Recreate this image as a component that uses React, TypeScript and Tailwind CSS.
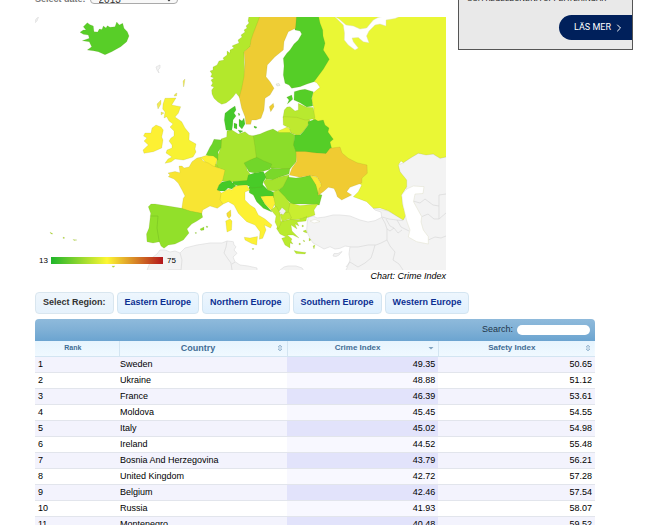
import React, { useState } from 'react';
import { ChevronRight } from 'lucide-react';

interface CountryRow {
  rank: number;
  country: string;
  crime: string;
  safety: string;
}

interface Shape {
  name: string;
  fill: string;
  d: string;
}

const rows: CountryRow[] = [
  { rank: 1, country: 'Sweden', crime: '49.35', safety: '50.65' },
  { rank: 2, country: 'Ukraine', crime: '48.88', safety: '51.12' },
  { rank: 3, country: 'France', crime: '46.39', safety: '53.61' },
  { rank: 4, country: 'Moldova', crime: '45.45', safety: '54.55' },
  { rank: 5, country: 'Italy', crime: '45.02', safety: '54.98' },
  { rank: 6, country: 'Ireland', crime: '44.52', safety: '55.48' },
  { rank: 7, country: 'Bosnia And Herzegovina', crime: '43.79', safety: '56.21' },
  { rank: 8, country: 'United Kingdom', crime: '42.72', safety: '57.28' },
  { rank: 9, country: 'Belgium', crime: '42.46', safety: '57.54' },
  { rank: 10, country: 'Russia', crime: '41.93', safety: '58.07' },
  { rank: 11, country: 'Montenegro', crime: '40.48', safety: '59.52' },
];

const regions = ['Eastern Europe', 'Northern Europe', 'Southern Europe', 'Western Europe'];

// Countries without data
const neutral: string[] = [
  'M406.7 190L400 172L398 165L403 163L410 158L418 153.300L433 154L440 158L447 156.700V271H345.500L347 268L350 260L349 254L350 246.700L345 246L340 248.300L335 249L330 246.700L324 249L317 245L313 243L310 238.300L308 234L306.700 230L307.300 222L308.300 217.300L313 216L317 218L325 217L333 215L340 215L350 216L360 220L368 222L375 220.700L381.700 217.300L381 212L375 210L373 208L388 211L397 216L403 220L406 215Z',
  'M146.700 271L151.700 258L157 254L160 250L165 250L170 252L175 251L180 253L185 248L197 245L210 243L222 243L227 241L233.300 241.700L234 245L236 246.700L234 250L237 253.300L233 257L235 261.700L240 265L248 266L257 268V271Z',
  'M279 271L284 267L288 266L296 266L302 268L304 271Z',
  'M333 256L334 253.500L338 253.500L342 251.500L339 255L336 256.500Z',
  'M156 67L160 65L160 68L158 70L159 73L157 70Z',
  'M34.500 23L36 19L38.500 17L37 21Z',
];

const neutralBorders: string[] = [
  'M381.700 217.300L385 223L387 229L387 240L381 243L376 245L368 245L358 247L350 247',
  'M375 245L373 252L371 258L365 263L358 267L350 262M350 262L346 267',
  'M387 240L390 246L395 252L393 260L399 264L403 270',
  'M382 217L389 219L397 220L403 220.700M386 219L390 226L394 228L390 231L387 229M397 220L401 227L409 231M394 228L398 233L402 230',
  'M421.700 216.700L428 214L434 219L439 219L439 195L446 194M413 201L420 203L425 199L433 205L439 206M439 219L446 213',
  'M428.300 240L435 237L441 238L446 236',
  'M180 253L182 260L181 270L168 270M227 241L226 247L224 253L228 259L231 263L232 270M235 262L232 264',
];

const shapes: Shape[] = [
  { name: 'Iceland', fill: '#58ce28', d: 'M80 32.300L83.300 30L86 30L83.300 26.700L87.300 22.700L90 24.700L93.300 26L94 31.700L97.700 32L99.300 29L102 29.500L103.300 26L106 28L107.300 25.700L110 27.300L115 26.700L116.700 22L119.300 25L122.700 23.300L124 28.300L127.300 31.700L129 36L126.700 41.700L120.700 46.700L111.700 51.700L105 54.700L98.300 51.700L93.300 50.700L87.300 50L91.700 46.700L89.300 41.700L82.300 40.700L89.300 38.300L88.300 35L83.300 34.300Z' },
  { name: 'Russia', fill: '#eaf735', d: 'M317 16H447V156.700L440 158.300L433.300 154L426 155L418.300 153.300L410 158.300L403.300 162.700L401 161L398.300 165L400 171.700L406.700 180L406.700 186.700L401.700 195L402.700 205L406 215L403.300 220L396.700 216L388.300 210.700L380 208L373.300 208.300L366.700 201.700L353.300 196.700L358.300 191.700L361.700 185L357 182L360 177L340 158L328 152L320 130L312 118L314 108.300L311.700 101.700L312.700 93.300L320 87.300L316.700 82.700L314 81.700L323 65L320 40Z' },
  { name: 'Kaliningrad', fill: '#eaf735', d: 'M278 131L283 129L287 127L291 130L290 134H279Z' },
  { name: 'Finland', fill: '#55ce27', d: 'M294 16H318.500L320 23L322.700 30L323 36L325 43.300L323.300 50L329.300 59.300L323.300 69.300L314 81.700L307 84L300 86.700L291.700 88.300L289 85L285 83.300L283.300 75L284 66L283.300 58.300L287 53L290 50L294 44L298.300 40L301.700 34L300 31L295 30Z' },
  { name: 'Aland', fill: '#f0f0f0', d: 'M276 84L279 83.500L280 85.500L277 86Z' },
  { name: 'Norway', fill: '#b3e82c', d: 'M249 16L248 21L249 23L246 26L247 28L244 30L245 32L241 35L242 37L238 40L239 43L234 45L232 46L234 48L230 50L230 53L227 51L227 55L223 58L224 60L219 61L217 65L213 67L213 70L210 71L212 74L210.700 76.700L214 78L211 80L212.700 83L211 86L214 87L211.700 90L212 94L214 98.300L218 102L221.700 104.300L226 103L230 100L233 97L236 93L240 98L245 80L244 52L250 47L255 33L262 16Z' },
  { name: 'Sweden', fill: '#eecc33', d: 'M260 16H296.500L295.500 28.300L288.300 31.700L284 41.700L283.300 50L275 56.700L267.300 65L266 76.700L270 81.700L274 88.300L270 95L265 98.300L264 110L261 118.300L256 120L251.700 120L250.700 124.300L246 124.300L245 116.700L241.700 108.300L239.300 97.300L241.700 88.300L244 76.700L245 63L244 51.700L250 46.700L251 40L253.300 33.300Z' },
  { name: 'Gotland', fill: '#eecc33', d: 'M269.300 106.700L273.300 103.300L274 106.700L270.700 111.700Z' },
  { name: 'Estonia', fill: '#55ce27', d: 'M294.300 91.700L300 90L305 89.300L313.300 91.700L311.700 98.300L312.700 106L306.700 107L300 102.700L294 100Z' },
  { name: 'Saaremaa', fill: '#55ce27', d: 'M286.700 97.300L291.700 95L292.700 99.300L287.300 104L289 100Z' },
  { name: 'Latvia', fill: '#b8e92f', d: 'M283 118L284.300 110L287 107L290 106.700L295 111L298.300 110L298.300 103.300L306.700 107.300L313.300 107.500L315 118.300L305 121L296.700 118Z' },
  { name: 'Lithuania', fill: '#bfe92f', d: 'M283 116.700L296.700 117.300L305 120L310 120L308.300 125L303.300 131.700L298.300 136L291 133L289.300 128L283.300 125Z' },
  { name: 'Denmark', fill: '#45c92a', d: 'M225 113.300L230 109.300L235 106L236 110L234 113L236 116L233 120L232.700 125L231.700 131L226 130L224.300 120Z' },
  { name: 'Danish islands', fill: '#45c92a', d: 'M239 119L242 121L244 118L245 124L242 129L239 126ZM234 123L237 124L237 129L234 128ZM254 126L257 127L256 128.500L254 127.500ZM238 130L243 131L240 133ZM238 113L240 114L239 116Z' },
  { name: 'Poland', fill: '#8bdd2a', d: 'M252 136L260 134L267 131L273 129L279 132.500L290 132.500L295 135L294 145L297 153L296 162L290 169L282 169L271 168L260 161L253 159Z' },
  { name: 'Belarus', fill: '#55ce27', d: 'M295 135L300 135L303.300 131.700L308.300 125L308 121.700L315 119.300L318 121L323.300 120L325 125L329 128L328 132L333.300 139.300L330 142L332 150L326 154L305 153L296 152L293.500 145Z' },
  { name: 'Germany', fill: '#a9e52e', d: 'M221 139L226.700 137L227 131L232 130L238.300 134L245 131.700L249 135L253.300 136L255 146.700L256.500 159L246 163L247 170L251 175L247 181L230 182L222 181L223 170L216 167L217 157L220.700 148Z' },
  { name: 'Netherlands', fill: '#6cd42a', d: 'M221.500 140L214 139.300L212 144L210 147L206 155L213 158L218 160L218 152L221 148Z' },
  { name: 'Belgium', fill: '#fdf133', d: 'M200.700 157.300L206 155.500L213.300 156L217.300 159L216 163L217 168L208 165Z' },
  { name: 'Luxembourg', fill: '#a9e52e', d: 'M215.500 164L218 166L217 168.500L215 167.500Z' },
  { name: 'France', fill: '#f8e533', d: 'M200.700 157.300L203 161L208.300 163L213 166L216.700 167.300L225 170L222.700 180L217.300 189L221.700 193.300L220.700 200L223.300 204L217.300 208.300L210 206L202.700 210L201.700 214L190 211.500L181.700 209L183.300 198.300L185 196L182 190L178.300 183.300L174 179L168.300 176.700L170 175L168 173L175 171.500L180 172.700L179 166L182 166L184 168L189 167L192 161.700L197 158Z' },
  { name: 'Switzerland', fill: '#45ca28', d: 'M217 190L219 185L222 182L230 180.500L234 184L236 186L231.700 189L228 188L225 191L220 191Z' },
  { name: 'Spain', fill: '#92e02a', d: 'M148.300 206.700L151 204L155 204L168 206L181.700 208.300L190 211L201.700 213.300L202.700 217.300L197 221L191.700 224L187 229L189 233L183.300 240L175 244L168.300 245L164 248.300L161 246L159.300 241.700L153 243L147 241.700L146.500 234L149 228L150.700 213.300Z' },
  { name: 'Balearic Islands', fill: '#92e02a', d: 'M200 229L204 227L204 230L201 230.500ZM206 226L208 226.500L207 228ZM195 232.500L196.500 232.500L196 234Z' },
  { name: 'Croatia', fill: '#4acb28', d: 'M249 187L262 184L267 189L275 193L274 198L261 197L265 204L272 212L263.300 208.300L256.700 201.700L253.300 195L249.300 192.700Z' },
  { name: 'Austria', fill: '#48cb28', d: 'M233 184L233 181.500L247 180.500L248.300 175L255 172.700L263.300 171.500L266.500 177L263.300 181.700L262 187L251.700 188L246.700 185L238.300 186Z' },
  { name: 'Czechia', fill: '#72d62a', d: 'M244 163L250 160L256.700 157.300L264 161L271.700 164L270 169.300L261.700 171.700L255 173L249 172Z' },
  { name: 'Slovakia', fill: '#7ad82a', d: 'M265 173.300L271.700 168L280 169L290 168.500L289 174L280 177L273.300 180L266 179Z' },
  { name: 'Hungary', fill: '#a4e32c', d: 'M263.300 181.700L266 179L272 180L280 176.700L289 175L289 180L284 187L277 191L268 190.500Z' },
  { name: 'Romania', fill: '#72d729', d: 'M288 177L296 178L303 177L310 175L315 182L318 189L318.300 194L322 195L319.300 205L305 204L291.700 204L285 198L278 190.500L283 187Z' },
  { name: 'Serbia', fill: '#b8e92f', d: 'M273.300 191.700L278.300 190L285 196.700L290 203.300L291 212L284 214L276 210L274 203Z' },
  { name: 'Bosnia', fill: '#fbf035', d: 'M260.500 196.500L266 196L273.300 196L275 203.300L271.700 210.500L265 204Z' },
  { name: 'Bulgaria', fill: '#c9ee30', d: 'M290 203L300 205.500L318 204L314 210L315 215L306 218L298 219.500L290 220L288.300 211.700Z' },
  { name: 'Greece', fill: '#b9ea2e', d: 'M276.500 228.500L280 221.700L290 219.300L298 220L307 216.500L306 221L297 222L299 226L295 224L297 229L291 225L292 231L299 238L293 235L287.300 235L292 239L291 241L293 244L290 243L290 248L285 245L281.700 238.300L286 237L280 234Z' },
  { name: 'Greek islands', fill: '#b9ea2e', d: 'M294 250.500L298 251.500L306 252.500L305 254L296 253.500ZM303 231L306 230L307 233L304 232ZM309 238L311 240L309 241ZM299 243L301 244L299 245ZM303 240L305 241L304 242ZM313 246L315 245L314 249ZM302 225L304 226L302 227Z' },
  { name: 'Albania', fill: '#c4ec30', d: 'M271 210L276 206L280 213L281 223L278.300 229L275 222L276 216Z' },
  { name: 'Macedonia', fill: '#c4ec30', d: 'M280 214.500L289 212L291.500 218L282 221.500Z' },
  { name: 'Kosovo', fill: '#f0f0f0', d: 'M282 207.500L286 211L283 215L279 211.500Z' },
  { name: 'Ukraine', fill: '#f0cb32', d: 'M296 151.500L305 151.500L317 153L326 153.500L330 148.300L340 147L342 153L348.300 158.300L357 162.700L367 165L367.300 173.300L362 178L361.700 183L350 187.300L346.700 191.700L351.700 195L341.700 200L337.300 196.700L336 192.700L334 188.500L328.300 187.300L323.300 191.700L318 195.500L319 186L321 184L317 176.700L310 175.500L300 177.300L289.300 175L292 168L296.500 161.700Z' },
  { name: 'Moldova', fill: '#fbe833', d: 'M310 175.500L317 177L320 182L321.700 186L319 188.500L318.300 194L316 185Z' },
  { name: 'Italy', fill: '#fdf133', d: 'M221 193.300L226.700 190L229 189L232 190L234 187L238.300 185.500L246.700 185L250 190L245 192L245 200L250 205L255 208.300L258.300 215L265 219L272 225L270.500 228L264.300 225L266 230L262.700 238.300L259.300 239.300L260 231.700L255 225L246.700 221.700L238.300 213.300L234 205L228.300 201.700L223.300 204L220 200Z' },
  { name: 'Sicily', fill: '#fdf133', d: 'M244.300 237.300L250 238L257.500 236.500L256.700 245L251.700 243.500L245 240Z' },
  { name: 'Sardinia', fill: '#fdf133', d: 'M225.700 221L230 219L232 221L231.500 230L227 232Z' },
  { name: 'Corsica', fill: '#f5df33', d: 'M226.700 213.300L230.700 210L231 216L229 218.500L227 216Z' },
  { name: 'Great Britain', fill: '#f8f233', d: 'M165 98.300L176 98L171.700 105L180.700 106.700L178.300 113.300L175 117L181.700 121.700L185 128L189.300 133.300L189 140L196 144L195 149L196 152L193 157L183.300 160L175 159L171 162L165 163.300L168 159L172 157L166 153L167 150L172 148L172 145L169 141L171 138L174 136L174 131L170 127L173 124L169 121L166.700 116.700L164 118L165 112L162.700 109L163 104Z' },
  { name: 'Scottish islands', fill: '#f2ea55', d: 'M157 104L161 100L161 104L158 109ZM161 112L164 113L161 115ZM183 81L185 79L184 86L183.500 87ZM175 94L177 93L176.500 96L174 96Z' },
  { name: 'Ireland', fill: '#fdf033', d: 'M145 133L151 133L152 128L156 125L161 127L163.300 130L161.700 137L163 140L161.700 148L153.300 151.700L144 153.300L143 150L148.300 145L144 141L147 138L143.500 136Z' },
  { name: 'Azores and Madeira', fill: '#b9ea2e', d: 'M50 232L53 234L51 234ZM63 237L65 238L63 238.500ZM73 239.500L77 240L74 240.500ZM112 266L115 266L113 267.500ZM252 248.500L254 248.500L253 250Z' },
];

const seas: string[] = [
  // White Sea
  'M334 16L343.300 25L344.500 33L344.300 40L348.300 45L355 50L358.300 48L353.300 41.700L352 38L358.300 37.500L363.300 41.700L369 42.700L366.500 36L369 31L375 25L380 24L386 26L386 20L395 18.500L401 16H384L378 17.500L373.300 20L366.700 28L360 29L353.300 26L346 25L339 19Z',
  // Caspian Sea
  'M413.300 186L424 186.700L423 193.500L415 194L413.500 201.700L421.700 216.700L421 222L423.300 230L428.300 236.700L428.300 244L416.700 241.700L408.300 237L410 230L406.700 221L403 205L401.700 195L406.700 189Z',
  // Marmara
  'M310 221L315 219.500L320 221.500L314 223Z',
];

const CrimeMap: React.FC = () => (
  <svg viewBox="35 17 411 253" className="block w-full" role="img" aria-label="Crime Index map of Europe">
    <defs>
      <linearGradient id="legend" x1="0" x2="1">
        <stop offset="0" stopColor="#1fb52b" />
        <stop offset="0.500" stopColor="#fdf733" />
        <stop offset="1" stopColor="#b3161b" />
      </linearGradient>
    </defs>
    {neutral.map(d => <path key={d} d={d} fill="#f3f3f3" stroke="#dedede" strokeWidth="0.700" />)}
    <g fill="none" stroke="#d9d9d9" strokeWidth="0.700">
      {neutralBorders.map(d => <path key={d} d={d} />)}
    </g>
    {shapes.map(shape => (
      <path key={shape.name} d={shape.d} fill={shape.fill} stroke="#6f7a20" strokeOpacity="0.220" strokeWidth="0.600" strokeLinejoin="round" />
    ))}
    <path d="M150.500 216L158 216L157 228L159.300 242" fill="none" stroke="#7cc524" strokeWidth="0.700" />
    {seas.map(d => <path key={d} d={d} fill="#fff" stroke="#d8d8c0" strokeWidth="0.400" />)}
    <rect x="51" y="257" width="112" height="7" fill="url(#legend)" />
    <text x="39" y="263" className="fill-black text-[8px]">13</text>
    <text x="167" y="263" className="fill-black text-[8px]">75</text>
  </svg>
);

const SortIcon: React.FC<{ active?: boolean }> = ({ active }) => (
  <svg viewBox="0 0 6 8" className="h-2 w-1.5 shrink-0" aria-hidden="true">
    {active ? (
      <path d="M0.500 3h5L3 5.500z" fill="#7fa3c0" />
    ) : (
      <path d="M1 3L3 1L5 3zM1 5L3 7L5 5z" fill="none" stroke="#8fb0cb" strokeWidth="0.800" />
    )}
  </svg>
);

const App: React.FC = () => {
  const [search, setSearch] = useState('');
  const visibleRows = rows.filter(r => r.country.toLowerCase().includes(search.toLowerCase()));

  return (
    <div className="h-screen overflow-hidden bg-white font-['Liberation_Sans',Arial,sans-serif] text-[9px] text-black">
      <main className="-mt-3.5 pr-[30px] pl-[35px]">
        <div className="flex items-start gap-3">
          <section className="min-w-0 flex-1">
            <div className="flex h-[18px] items-end gap-1">
              <label htmlFor="date" className="leading-[10px] font-bold text-[#777]">Select date:</label>
              <select id="date" className="h-3 w-[88px] rounded-sm border border-[#aaa] bg-[#f8f8f8] px-1 text-[10px] leading-[10px] text-[#333]">
                <option>2013</option>
              </select>
            </div>
            <div className="mt-[13px]">
              <CrimeMap />
            </div>
            <p className="text-right leading-3 italic">Chart: Crime Index</p>
          </section>

          <aside className="h-16 w-[175px] shrink-0 border border-[#555] bg-[#e9e9e9] font-[Roboto,sans-serif]">
            <p className="pt-1.5 pl-2 text-[8px] leading-3 whitespace-nowrap text-[#222]">OCH REGELBUNDNA UPPDATERINGAR</p>
            <button type="button" className="mt-2.5 ml-auto flex h-[25px] w-[73px] items-center justify-center gap-0.5 rounded-l-full bg-[#00205b] pl-2 text-[9px] text-white">
              LÄS MER
              <ChevronRight className="h-3 w-3" />
            </button>
          </aside>
        </div>

        <div className="max-w-[560px]">
          <nav className="mt-2.5 flex h-[22px] gap-[3px] font-bold" aria-label="Select Region">
            <span className="flex items-center rounded border border-[#d9e6ef] bg-linear-to-b from-[#eff6fc] to-[#e6f2fc] px-[7px] text-[#333]">Select Region:</span>
            {regions.map(region => (
              <a key={region} href="#region" className="flex items-center rounded border border-[#d4e5f1] bg-linear-to-b from-[#eef6fd] to-[#dff0fe] px-[7px] text-[#0c2f92]">
                {region}
              </a>
            ))}
          </nav>

          {/* Table toolbar */}
          <div className="mt-[5px] flex h-[22px] items-center justify-end gap-1 rounded-t bg-linear-to-b from-[#8fbadb] via-[#7fb0d6] to-[#6ba4d0] pr-[5px]">
            <label htmlFor="search" className="text-[#1f3548]">Search:</label>
            <input
              id="search"
              type="text"
              value={search}
              onChange={(e) => setSearch(e.target.value)}
              className="h-2.5 w-[73px] rounded-full bg-white px-1.5 outline-none"
            />
          </div>

          <table className="w-full table-fixed border-collapse">
            <thead>
              <tr className="h-[15px] bg-linear-to-b from-[#e6f4fe] to-[#f0f9ff] text-[8px] text-[#3f6d95]">
                <th className="w-[15%] border-r border-b border-[#d3e5f2] p-0 pr-2 text-[7px]">Rank</th>
                <th className="w-[30%] border-r border-b border-[#d3e5f2] p-0 text-[9px]">
                  <div className="flex h-3 items-center pr-1"><span className="flex-1">Country</span><SortIcon /></div>
                </th>
                <th className="w-[27%] border-r border-b border-[#d3e5f2] p-0">
                  <div className="flex h-3 items-center pr-1"><span className="flex-1">Crime Index</span><SortIcon active /></div>
                </th>
                <th className="w-[28%] border-b border-[#d3e5f2] p-0">
                  <div className="flex h-3 items-center pr-1"><span className="flex-1">Safety Index</span><SortIcon /></div>
                </th>
              </tr>
            </thead>
            <tbody>
              {visibleRows.map(row => (
                <tr key={row.rank} className="group h-4 border-b border-[#e2e5ec] leading-3 odd:bg-[#f3f3fd]">
                  <td className="p-0 pl-[3px]">{row.rank}</td>
                  <td className="p-0 pl-px">{row.country}</td>
                  <td className="bg-[#f8f8ff] p-0 pr-[3px] text-right group-odd:bg-[#e2e3fb]">{row.crime}</td>
                  <td className="p-0 pr-[3px] text-right">{row.safety}</td>
                </tr>
              ))}
            </tbody>
          </table>
        </div>
      </main>
    </div>
  );
};

export default App;
